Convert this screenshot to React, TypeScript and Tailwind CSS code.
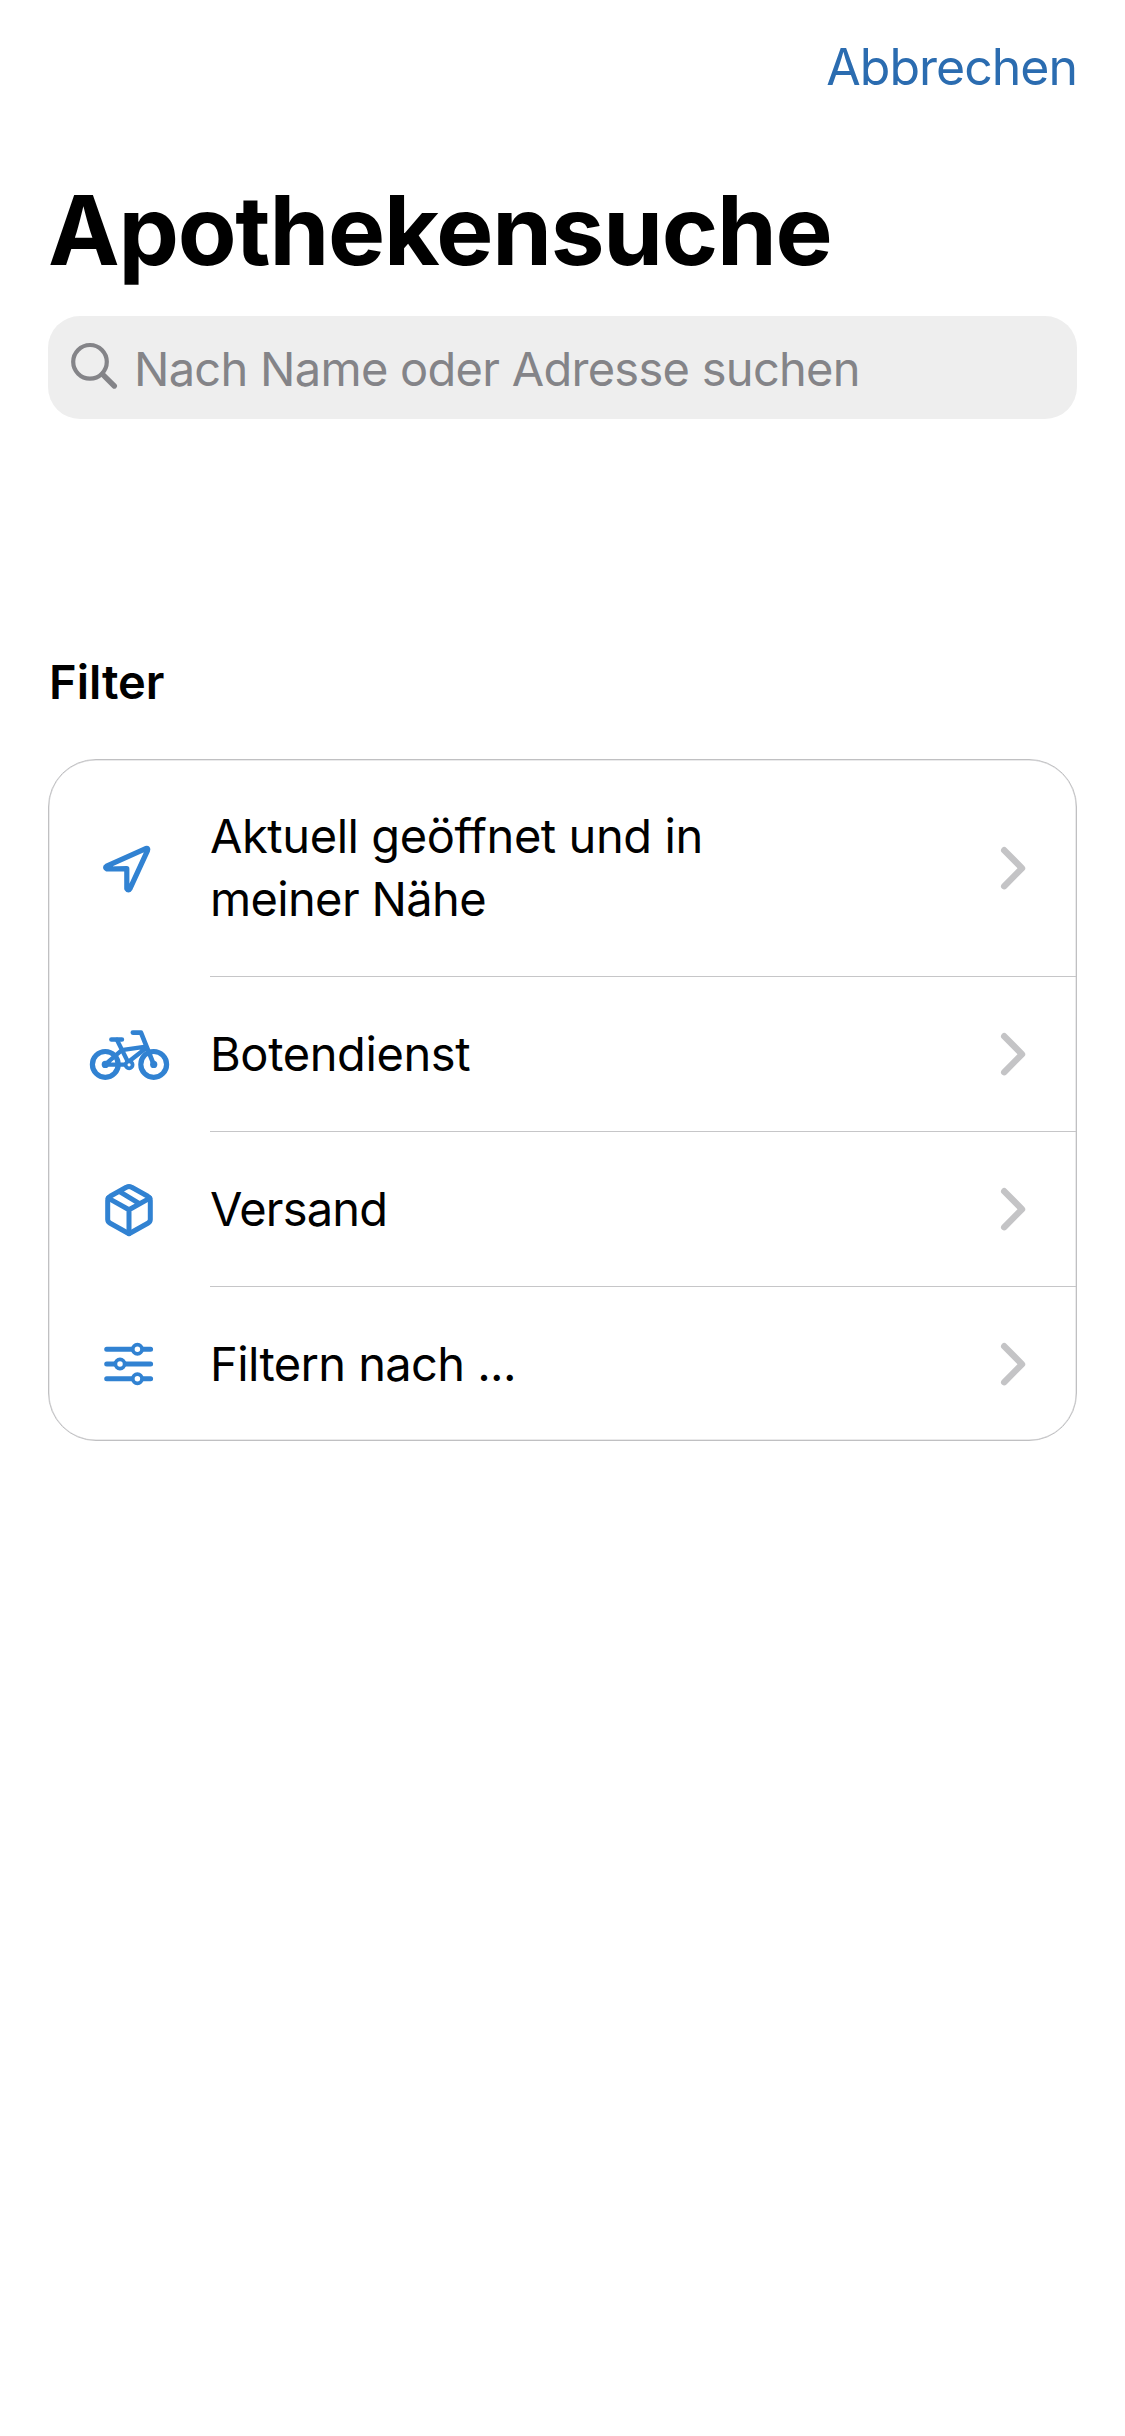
import type { ReactNode } from "react";

function IconFrame({ children }: { children: ReactNode }) {
  return (
    <svg
      className="mr-[39px] ml-[38px] h-[72px] w-[84px] shrink-0 text-[#3182d2]"
      viewBox="0 0 84 72"
      fill="none"
      stroke="currentColor"
      strokeLinecap="round"
      strokeLinejoin="round"
      aria-hidden="true"
    >
      {children}
    </svg>
  );
}

function LocationIcon() {
  return (
    <IconFrame>
      <path
        strokeWidth="5.2"
        d="M19.6 33.2 58.7 15.6Q61.6 14.8 60.5 17.7L43 55.6Q41.4 58.2 39.8 55.6V35.7L20 36Q17.4 34.6 19.6 33.2Z"
      />
    </IconFrame>
  );
}

function BikeIcon() {
  return (
    <IconFrame>
      <g strokeWidth="5.2">
        <circle cx="18.3" cy="45.4" r="12.9" />
        <circle cx="66.7" cy="45.4" r="12.9" />
      </g>
      <g fill="currentColor" stroke="none">
        <circle cx="18.3" cy="45.4" r="3.6" />
        <circle cx="66.7" cy="45.4" r="3.6" />
      </g>
      <path strokeWidth="4.3" d="M18.3 45.7H38M18.3 45.4 34.5 31.3M29.9 20.7 41 43M34.5 31.1 59 27.7M42.5 42 59.5 28.7" />
      <path strokeWidth="4.6" d="M45.8 13.6H54L66.7 45.4M24.4 20.5H34.9" />
      <circle cx="42.1" cy="45.8" r="3.5" strokeWidth="3.8" fill="white" />
    </IconFrame>
  );
}

function ParcelIcon() {
  return (
    <IconFrame>
      <g strokeWidth="5" transform="translate(0 -0.5)">
        <path d="M39.3 13.8Q42 12.2 44.7 13.8L60.8 22.8Q63.3 24.4 63.3 27V46Q63.3 48.4 60.8 49.8L42 60.2 23.2 49.8Q20.7 48.4 20.7 46V27Q20.7 24.4 23.2 22.8Z" />
        <path d="M21.2 24.6 42 36.3 62.8 24.6M42 36.3V60M32.6 18.2 51.6 29.6" />
      </g>
    </IconFrame>
  );
}

function SlidersIcon() {
  return (
    <IconFrame>
      <path strokeWidth="5" d="M19.7 21.2H63.6M19.7 36H63.6M19.7 50.8H63.6" />
      <g strokeWidth="3.7" fill="white">
        <circle cx="50.4" cy="21.2" r="4.6" />
        <circle cx="33" cy="36" r="4.6" />
        <circle cx="50.4" cy="50.8" r="4.6" />
      </g>
    </IconFrame>
  );
}

function Chevron() {
  return (
    <svg
      className="mr-[45px] h-[48px] w-[32px] shrink-0 text-[#c4c4c6]"
      viewBox="0 0 32 48"
      fill="none"
      stroke="currentColor"
      strokeWidth="6.4"
      strokeLinecap="round"
      strokeLinejoin="round"
      aria-hidden="true"
    >
      <path d="M5.2 6.2 23 24.2 5.2 42.2" />
    </svg>
  );
}

function Row({ icon, height, divider = true, children }: { icon: ReactNode; height: string; divider?: boolean; children: ReactNode }) {
  return (
    <li className={`flex items-center ${height}`}>
      {icon}
      <div className={`flex h-full flex-1 items-center justify-between ${divider ? "border-b border-[#c6c6c8]" : ""}`}>
        <div className="pb-[2px] text-[47px] leading-[63px]">{children}</div>
        <Chevron />
      </div>
    </li>
  );
}

export default function App() {
  return (
    <main className="min-h-[2436px] bg-white px-12 pt-[37px] font-['Inter',sans-serif] text-black">
      <header className="flex justify-end">
        <button className="text-[50px] leading-[60px] tracking-[-1px] text-[#2b6cb0]">Abbrechen</button>
      </header>

      <h1 className="mt-[75px] text-[96px] leading-[116px] font-bold tracking-[-1.25px]">Apothekensuche</h1>

      <div className="mt-[28px] flex h-[103px] items-center rounded-[32px] bg-[#eeeeee] text-[#848488]">
        <svg className="ml-[20px] h-[56px] w-[52px] shrink-0" viewBox="0 0 52 56" fill="none" stroke="currentColor" strokeLinecap="round" aria-hidden="true">
          <circle cx="22" cy="21.8" r="16.8" strokeWidth="4.2" />
          <path d="M34.6 34.4 46.3 46" strokeWidth="5.4" />
        </svg>
        <span className="ml-[14px] pt-[3px] text-[47px] leading-[60px] tracking-[-0.72px]">Nach Name oder Adresse suchen</span>
      </div>

      <h2 className="mt-[233px] ml-px text-[47px] leading-[60px] font-semibold">Filter</h2>

      <ul className="mt-[47px] rounded-[48px] border border-[#c0c0c2] shadow-[inset_0_0_0_0.5px_#d6d6d8]">
        <Row icon={<LocationIcon />} height="h-[217px]">
          <p className="tracking-[-0.43px]">Aktuell geöffnet und in</p>
          <p className="tracking-[-0.65px]">meiner Nähe</p>
        </Row>
        <Row icon={<BikeIcon />} height="h-[155px]">
          <p className="tracking-[-0.4px]">Botendienst</p>
        </Row>
        <Row icon={<ParcelIcon />} height="h-[155px]">
          <p className="tracking-[-0.8px]">Versand</p>
        </Row>
        <Row icon={<SlidersIcon />} height="h-[153px]" divider={false}>
          <p className="pt-px tracking-[-0.6px]">Filtern nach ...</p>
        </Row>
      </ul>
    </main>
  );
}
